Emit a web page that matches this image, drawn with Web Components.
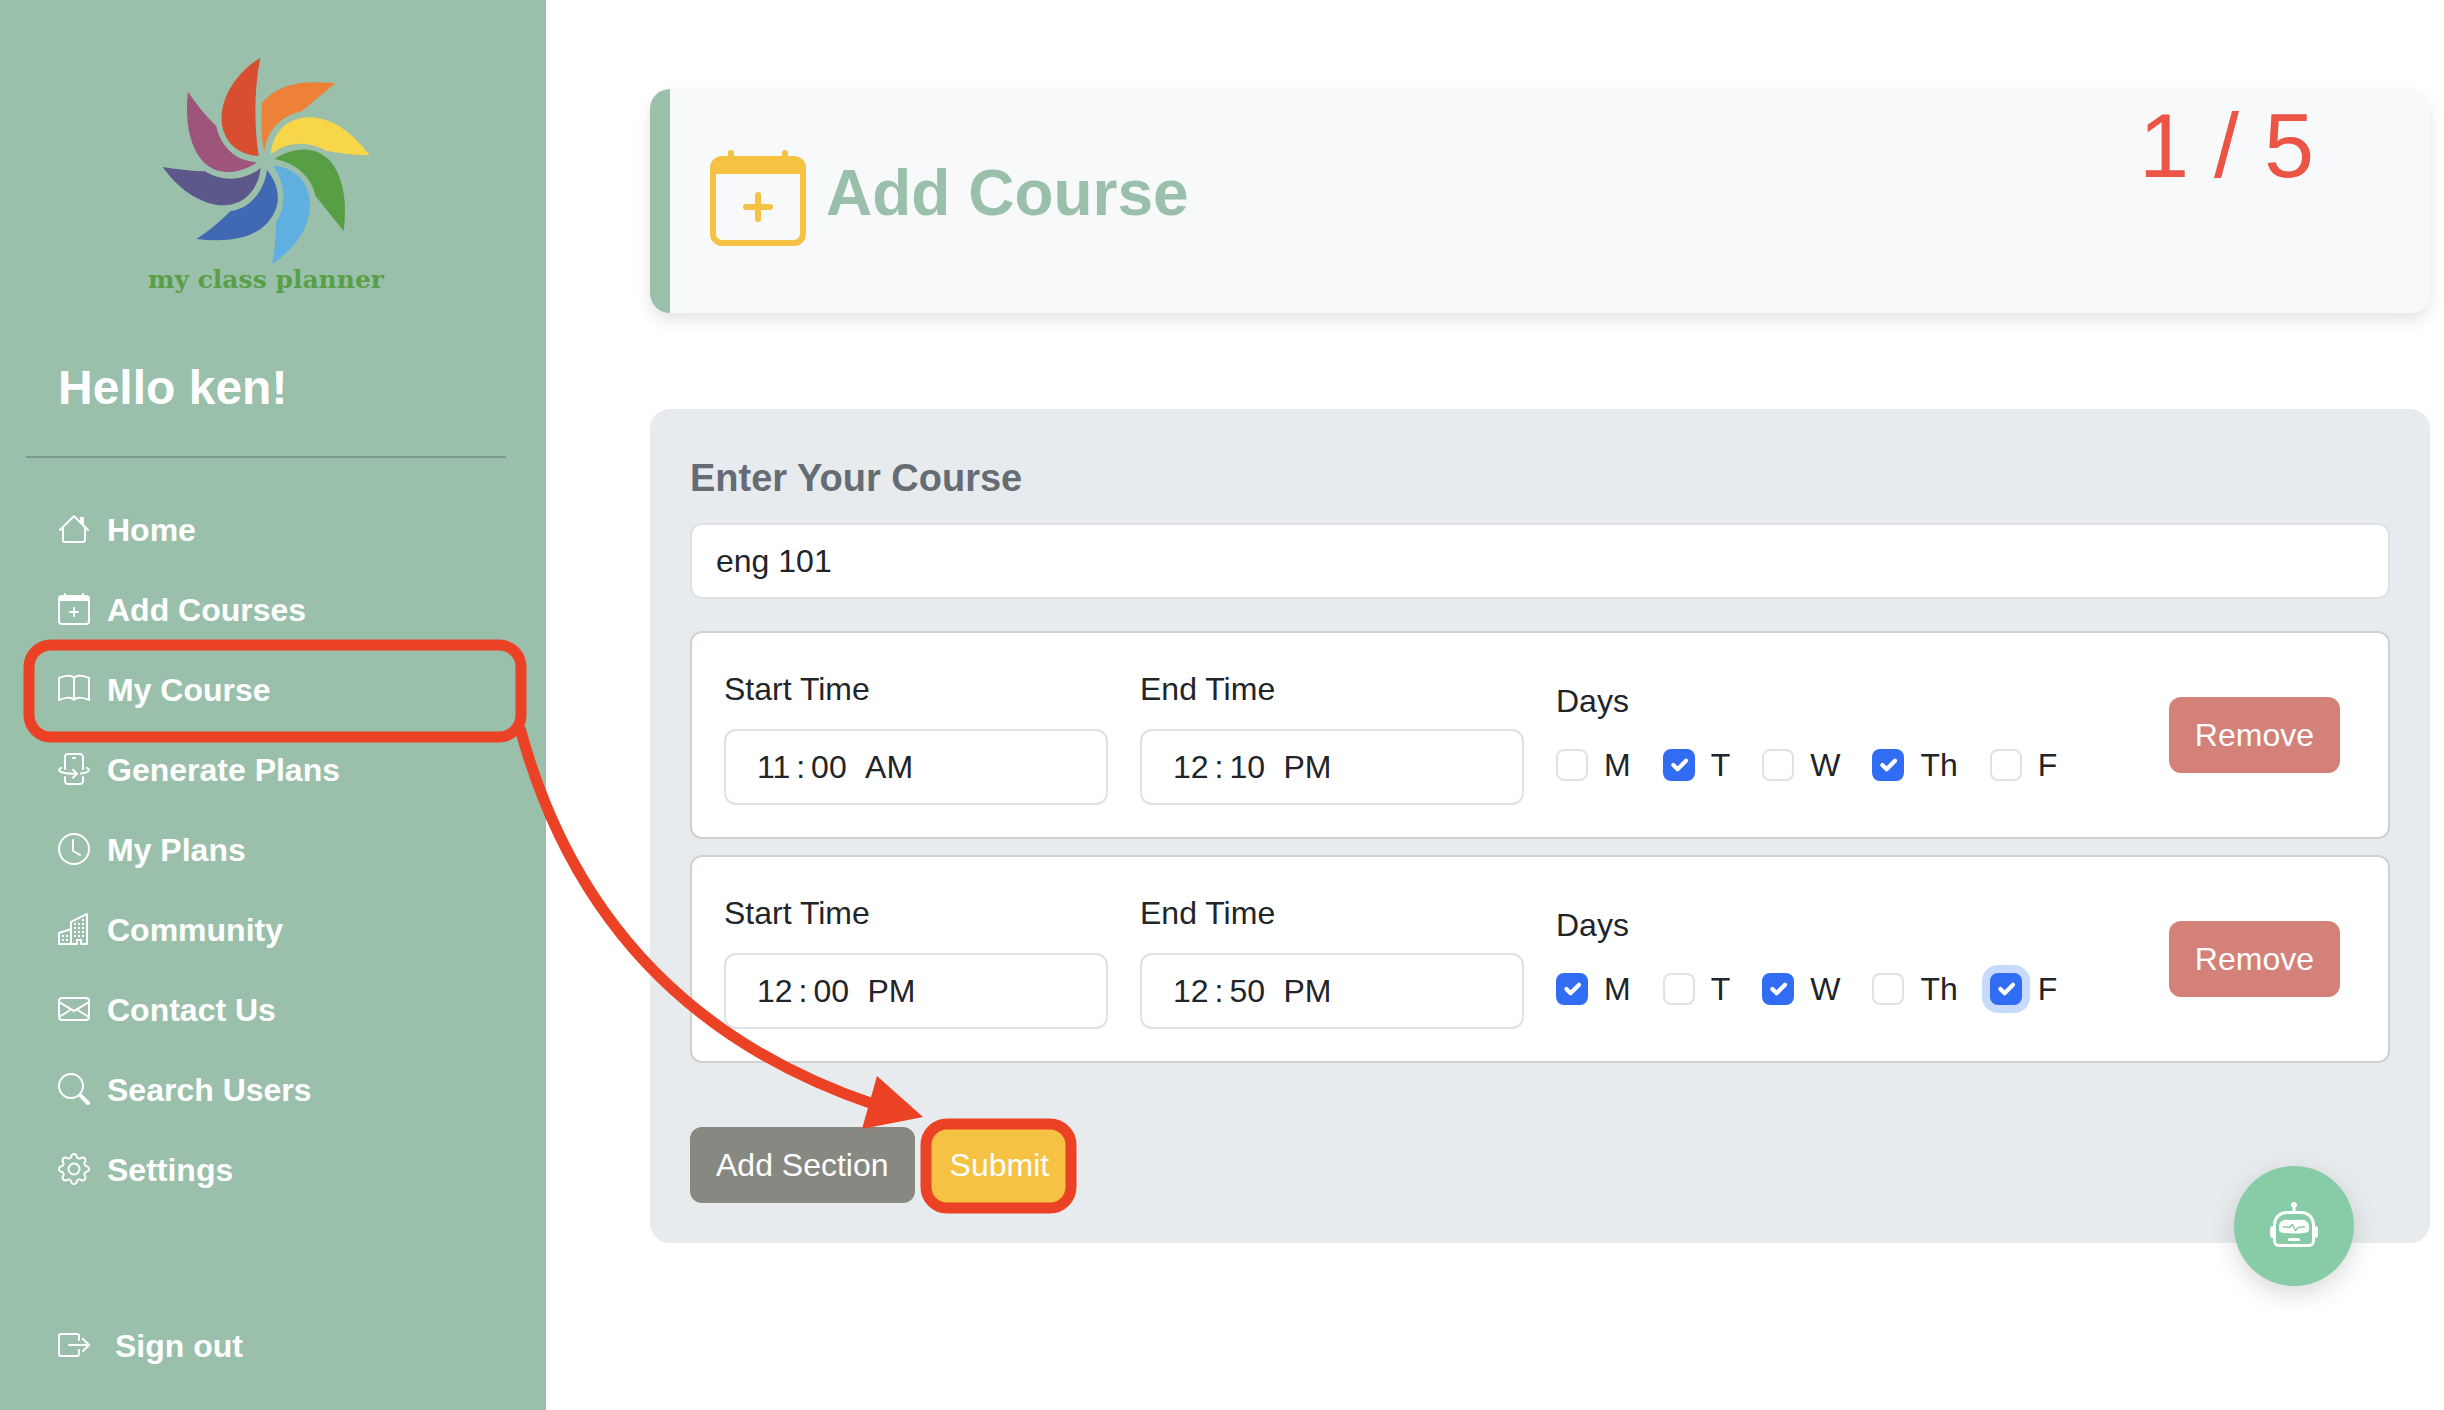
<!DOCTYPE html>
<html lang="en-US">
<head>
<meta charset="utf-8">
<title>My Class Planner</title>
<style>
  html, body { margin: 0; }
  body {
    font-family: "Liberation Sans", Arial, sans-serif;
    font-size: 32px;
    line-height: 48px;
    color: #212529;
    background: #fff;
  }
</style>
</head>
<body>
<planner-app></planner-app>

<script>
const define = (name, html, setup) => {
  const template = document.createElement('template');
  template.innerHTML = html;
  customElements.define(name, class extends HTMLElement {
    constructor() {
      super();
      this.attachShadow({ mode: 'open' }).append(template.content.cloneNode(true));
    }
    connectedCallback() {
      if (setup && !this.ready) { this.ready = true; setup(this, this.shadowRoot); }
    }
  });
};

const ICONS = {
  house: '<path d="M8.707 1.5a1 1 0 0 0-1.414 0L.646 8.146a.5.5 0 0 0 .708.708L2 8.207V13.5A1.5 1.5 0 0 0 3.5 15h9a1.5 1.5 0 0 0 1.5-1.5V8.207l.646.647a.5.5 0 0 0 .708-.708L13 5.793V2.5a.5.5 0 0 0-.5-.5h-1a.5.5 0 0 0-.5.5v1.293zM13 7.207V13.5a.5.5 0 0 1-.5.5h-9a.5.5 0 0 1-.5-.5V7.207l5-5z"/>',
  calendar: '<path d="M8 7a.5.5 0 0 1 .5.5V9H10a.5.5 0 0 1 0 1H8.5v1.5a.5.5 0 0 1-1 0V10H6a.5.5 0 0 1 0-1h1.5V7.5A.5.5 0 0 1 8 7"/><path d="M3.5 0a.5.5 0 0 1 .5.5V1h8V.5a.5.5 0 0 1 1 0V1h1a2 2 0 0 1 2 2v11a2 2 0 0 1-2 2H2a2 2 0 0 1-2-2V3a2 2 0 0 1 2-2h1V.5a.5.5 0 0 1 .5-.5M1 4v10a1 1 0 0 0 1 1h12a1 1 0 0 0 1-1V4z"/>',
  book: '<path d="M1 2.828c.885-.37 2.154-.769 3.388-.893 1.33-.134 2.458.063 3.112.752v9.746c-.935-.53-2.12-.603-3.213-.493-1.18.12-2.37.461-3.287.811zm7.5-.141c.654-.689 1.782-.886 3.112-.752 1.234.124 2.503.523 3.388.893v9.923c-.918-.35-2.107-.692-3.287-.81-1.094-.111-2.278-.039-3.213.492zM8 1.783C7.015.936 5.587.81 4.287.94c-1.514.153-3.042.672-3.994 1.105A.5.5 0 0 0 0 2.5v11a.5.5 0 0 0 .707.455c.882-.4 2.303-.881 3.68-1.02 1.409-.142 2.59.087 3.223.877a.5.5 0 0 0 .78 0c.633-.79 1.814-1.019 3.222-.877 1.378.139 2.8.62 3.681 1.02A.5.5 0 0 0 16 13.5v-11a.5.5 0 0 0-.293-.455c-.952-.433-2.48-.952-3.994-1.105C10.413.809 8.985.936 8 1.783"/>',
  phone: '<g fill="none" stroke="currentColor" stroke-linecap="round" stroke-linejoin="round"><path d="M3.5 8V2A1.5 1.5 0 0 1 5 .5h6A1.5 1.5 0 0 1 12.5 2v6M3.5 12v2A1.5 1.5 0 0 0 5 15.5h6a1.5 1.5 0 0 0 1.5-1.5v-2M7.5 2.5h1M1.6 7.5C.9 7.8.5 8.1.5 8.5c0 1 3.2 1.9 7.5 1.9h1.5M7.5 8.4l2 2-2 2M14.4 7.5c.7.3 1.1.6 1.1 1 0 .7-1.5 1.4-4 1.8"/></g>',
  clock: '<path d="M8 3.5a.5.5 0 0 0-1 0V9a.5.5 0 0 0 .252.434l3.5 2a.5.5 0 0 0 .496-.868L8 8.71z"/><path d="M8 16A8 8 0 1 0 8 0a8 8 0 0 0 0 16m7-8A7 7 0 1 1 1 8a7 7 0 0 1 14 0"/>',
  buildings: '<path d="M14.763.075A.5.5 0 0 1 15 .5v15a.5.5 0 0 1-.5.5h-3a.5.5 0 0 1-.5-.5V14h-1v1.5a.5.5 0 0 1-.5.5h-9a.5.5 0 0 1-.5-.5V10a.5.5 0 0 1 .342-.474L6 7.64V4.5a.5.5 0 0 1 .276-.447l8-4a.5.5 0 0 1 .487.022M6 8.694 1 10.36V15h5zM7 15h2v-1.5a.5.5 0 0 1 .5-.5h2a.5.5 0 0 1 .5.5V15h2V1.309l-7 3.5z"/><path d="M2 11h1v1H2zm2 0h1v1H4zm-2 2h1v1H2zm2 0h1v1H4zm4-4h1v1H8zm2 0h1v1h-1zm-2 2h1v1H8zm2 0h1v1h-1zm2-2h1v1h-1zm0 2h1v1h-1zM8 7h1v1H8zm2 0h1v1h-1zm2 0h1v1h-1zM8 5h1v1H8zm2 0h1v1h-1zm2 0h1v1h-1zm0-2h1v1h-1z"/>',
  envelope: '<path d="M0 4a2 2 0 0 1 2-2h12a2 2 0 0 1 2 2v8a2 2 0 0 1-2 2H2a2 2 0 0 1-2-2zm2-1a1 1 0 0 0-1 1v.217l7 4.2 7-4.2V4a1 1 0 0 0-1-1zm13 2.383-4.708 2.825L15 11.105zm-.034 6.876-5.64-3.471L8 9.583l-1.326-.795-5.64 3.47A1 1 0 0 0 2 13h12a1 1 0 0 0 .966-.741M1 11.105l4.708-2.897L1 5.383z"/>',
  search: '<path d="M11.742 10.344a6.5 6.5 0 1 0-1.397 1.398h-.001q.044.06.098.115l3.85 3.85a1 1 0 0 0 1.415-1.414l-3.85-3.85a1 1 0 0 0-.115-.1zM12 6.5a5.5 5.5 0 1 1-11 0 5.5 5.5 0 0 1 11 0"/>',
  gear: '<path d="M8 4.754a3.246 3.246 0 1 0 0 6.492 3.246 3.246 0 0 0 0-6.492M5.754 8a2.246 2.246 0 1 1 4.492 0 2.246 2.246 0 0 1-4.492 0"/><path d="M9.796 1.343c-.527-1.79-3.065-1.79-3.592 0l-.094.319a.873.873 0 0 1-1.255.52l-.292-.16c-1.64-.892-3.433.902-2.54 2.541l.159.292a.873.873 0 0 1-.52 1.255l-.319.094c-1.79.527-1.79 3.065 0 3.592l.319.094a.873.873 0 0 1 .52 1.255l-.16.292c-.892 1.64.901 3.434 2.541 2.54l.292-.159a.873.873 0 0 1 1.255.52l.094.319c.527 1.79 3.065 1.79 3.592 0l.094-.319a.873.873 0 0 1 1.255-.52l.292.16c1.64.893 3.434-.902 2.54-2.541l-.159-.292a.873.873 0 0 1 .52-1.255l.319-.094c1.79-.527 1.79-3.065 0-3.592l-.319-.094a.873.873 0 0 1-.52-1.255l.16-.292c.893-1.64-.902-3.433-2.541-2.54l-.292.159a.873.873 0 0 1-1.255-.52zm-2.633.283c.246-.835 1.428-.835 1.674 0l.094.319a1.873 1.873 0 0 0 2.693 1.115l.291-.16c.764-.415 1.6.42 1.184 1.185l-.159.292a1.873 1.873 0 0 0 1.116 2.692l.318.094c.835.246.835 1.428 0 1.674l-.319.094a1.873 1.873 0 0 0-1.115 2.693l.16.291c.415.764-.42 1.6-1.185 1.184l-.291-.159a1.873 1.873 0 0 0-2.693 1.116l-.094.318c-.246.835-1.428.835-1.674 0l-.094-.319a1.873 1.873 0 0 0-2.692-1.115l-.292.16c-.764.415-1.6-.42-1.184-1.185l.159-.291A1.873 1.873 0 0 0 1.945 8.93l-.319-.094c-.835-.246-.835-1.428 0-1.674l.319-.094A1.873 1.873 0 0 0 3.06 4.377l-.16-.292c-.415-.764.42-1.6 1.185-1.184l.292.159a1.873 1.873 0 0 0 2.692-1.115z"/>',
  exit: '<path d="M10 12.5a.5.5 0 0 1-.5.5h-8a.5.5 0 0 1-.5-.5v-9a.5.5 0 0 1 .5-.5h8a.5.5 0 0 1 .5.5v2a.5.5 0 0 0 1 0v-2A1.5 1.5 0 0 0 9.5 2h-8A1.5 1.5 0 0 0 0 3.5v9A1.5 1.5 0 0 0 1.5 14h8a1.5 1.5 0 0 0 1.5-1.5v-2a.5.5 0 0 0-1 0z"/><path d="M15.854 8.354a.5.5 0 0 0 0-.708l-3-3a.5.5 0 0 0-.708.708L14.293 7.5H5.5a.5.5 0 0 0 0 1h8.793l-2.147 2.146a.5.5 0 0 0 .708.708z"/>',
  robot: '<path d="M6 12.5a.5.5 0 0 1 .5-.5h3a.5.5 0 0 1 0 1h-3a.5.5 0 0 1-.5-.5M3 8.062C3 6.76 4.235 5.765 5.53 5.886a26.6 26.6 0 0 0 4.94 0C11.765 5.765 13 6.76 13 8.062v1.157a.93.93 0 0 1-.765.935c-.845.147-2.34.346-4.235.346s-3.39-.2-4.235-.346A.93.93 0 0 1 3 9.219zm4.542-.827a.25.25 0 0 0-.217.068l-.92.9a25 25 0 0 1-1.871-.183.25.25 0 0 0-.068.495c.55.076 1.232.149 2.02.193a.25.25 0 0 0 .189-.071l.754-.736.847 1.71a.25.25 0 0 0 .404.062l.932-.97a25 25 0 0 0 1.922-.188.25.25 0 0 0-.068-.495c-.538.074-1.207.145-1.98.189a.25.25 0 0 0-.166.076l-.754.785-.842-1.7a.25.25 0 0 0-.182-.135"/><path d="M8.5 1.866a1 1 0 1 0-1 0V3h-2A4.5 4.5 0 0 0 1 7.5V8a1 1 0 0 0-1 1v2a1 1 0 0 0 1 1v1a2 2 0 0 0 2 2h10a2 2 0 0 0 2-2v-1a1 1 0 0 0 1-1V9a1 1 0 0 0-1-1v-.5A4.5 4.5 0 0 0 10.5 3h-2zM14 7.5V13a1 1 0 0 1-1 1H3a1 1 0 0 1-1-1V7.5A3.5 3.5 0 0 1 5.5 4h5A3.5 3.5 0 0 1 14 7.5"/>'
};

define('ui-icon', `
  <style>
    :host { display: inline-block; width: 32px; height: 32px; vertical-align: -4px; }
    svg { display: block; width: 100%; height: 100%; fill: currentColor; }
  </style>
  <svg viewBox="0 0 16 16" aria-hidden="true"></svg>`,
  (el, root) => { root.querySelector('svg').innerHTML = ICONS[el.getAttribute('name')]; });

define('planner-logo', `
  <style>
    :host { display: flex; flex-direction: column; align-items: center; color: #599f45; }
    svg { display: block; width: 300px; height: 226px; }
    span { font: bold 25px/28px "DejaVu Serif", serif; }
  </style>
  <svg viewBox="-12 0 900 678" role="img" aria-label="Pinwheel">
    <path fill="#d84e31" d="M421 53C350 98 301 170 305 245C310 303 352 345 416 348C402 250 402 150 421 53Z"/>
    <path fill="#ed8137" d="M426 189C475 130 550 120 646 130L545 214C483 228 440 270 433 337C423 290 424 240 426 189Z"/>
    <path fill="#f7d64a" d="M453 343C457 270 512 228 575 232C650 238 705 288 749 346Q680 344 618 332C565 302 500 304 453 343Z"/>
    <path fill="#579e44" d="M463 357C525 317 598 315 640 375C674 427 681 500 671 573L586 467C577 412 525 367 463 357Z"/>
    <path fill="#5fafe1" d="M460 378C516 378 570 422 570 495C568 570 520 630 456 672C465 630 468 590 469 545C503 490 494 428 460 378Z"/>
    <path fill="#4168b3" d="M441 390C482 440 485 500 445 545C400 600 310 607 230 597Q285 560 332 513C390 505 432 455 441 390Z"/>
    <path fill="#5c588b" d="M422 384C417 440 380 492 315 496C240 498 170 440 128 381Q200 393 255 394C305 425 370 425 422 384Z"/>
    <path fill="#9d557b" d="M411 367C360 402 290 412 245 360C205 310 195 235 204 155Q240 210 289 259C302 322 350 364 411 367Z"/>
  </svg>
  <span>my class planner</span>`);

define('nav-item', `
  <style>
    :host { display: block; }
    a { display: block; padding: 16px 32px; color: #fff; font-weight: bold; text-decoration: none; }
    ui-icon { margin-right: 17px; }
    :host([wide]) ui-icon { margin-right: 25px; }
  </style>
  <a href="#"><slot></slot></a>`,
  (el, root) => {
    const icon = document.createElement('ui-icon');
    icon.setAttribute('name', el.getAttribute('icon'));
    root.querySelector('a').prepend(icon);
  });

define('side-bar', `
  <style>
    :host { display: block; box-sizing: border-box; flex: none; width: 546px; padding: 40px 40px 24px 26px; background: #9abfaa; color: #fff; }
    h2 { margin: 65px 32px 39px; font-size: 48px; line-height: 58px; }
    hr { margin: 0 0 32px; border: 0; height: 2px; background: #7b9988; }
    footer { margin-top: 96px; }
  </style>
  <planner-logo></planner-logo>
  <h2>Hello ken!</h2>
  <hr>
  <nav>
    <nav-item icon="house">Home</nav-item>
    <nav-item icon="calendar">Add Courses</nav-item>
    <nav-item icon="book">My Course</nav-item>
    <nav-item icon="phone">Generate Plans</nav-item>
    <nav-item icon="clock">My Plans</nav-item>
    <nav-item icon="buildings">Community</nav-item>
    <nav-item icon="envelope">Contact Us</nav-item>
    <nav-item icon="search">Search Users</nav-item>
    <nav-item icon="gear">Settings</nav-item>
  </nav>
  <footer><nav-item icon="exit" wide>Sign out</nav-item></footer>`);

define('page-header', `
  <style>
    :host { display: flex; justify-content: space-between; align-items: flex-start; border-left: 20px solid #9abfaa; border-radius: 20px; background: #f8f9fb; box-shadow: 0 8px 16px rgba(0, 0, 0, .1); }
    .title { display: flex; gap: 20px; padding: 61px 40px 67px; }
    ui-icon { width: 96px; height: 96px; color: #f6c244; }
    h1 { margin: 0; font-size: 64px; line-height: 86px; color: #9abfaa; }
    .step { padding: 12px 116px 0 0; font-size: 90px; line-height: 90px; color: #ec5545; }
  </style>
  <div class="title"><ui-icon name="calendar"></ui-icon><h1><slot></slot></h1></div>
  <div class="step"><slot name="step"></slot></div>`);

define('ui-button', `
  <style>
    :host { display: block; }
    button { display: block; margin: 0; padding: 14px 26px; border: 0; border-radius: 12px; font: inherit; color: #fff; background: var(--fill); }
  </style>
  <button type="button"><slot></slot></button>`);

define('text-field', `
  <style>
    :host { display: block; }
    label { display: block; margin-bottom: 16px; }
    :host([heading]) label { font-size: 38px; font-weight: bold; line-height: 58px; color: #666c73; }
    input { display: block; box-sizing: border-box; width: 100%; height: 76px; margin: 0; padding: 12px 24px; border: 2px solid #dee2e6; border-radius: 12px; background: #fff; font: inherit; color: inherit; outline: 0; }
    input::-webkit-calendar-picker-indicator { display: none; }
    input::-webkit-datetime-edit { padding: 0 1px; }
    input::-webkit-datetime-edit-fields-wrapper { padding: 0; }
    input::-webkit-datetime-edit-hour-field,
    input::-webkit-datetime-edit-minute-field,
    input::-webkit-datetime-edit-ampm-field { padding: 0 6px; }
  </style>
  <label for="field"><slot></slot></label>
  <input id="field">`,
  (el, root) => {
    const input = root.querySelector('input');
    input.type = el.getAttribute('type') || 'text';
    input.setAttribute('value', el.getAttribute('value'));
  });

define('day-check', `
  <style>
    :host { display: flex; gap: 16px; }
    input { appearance: none; flex: none; width: 32px; height: 32px; margin: 8px 0 0; border: 2px solid #dee2e6; border-radius: 8px; background: #fff; }
    input:checked { border-color: #316cf4; background: #316cf4 url("data:image/svg+xml,%3Csvg xmlns='http://www.w3.org/2000/svg' viewBox='0 0 20 20'%3E%3Cpath fill='none' stroke='%23fff' stroke-linecap='round' stroke-linejoin='round' stroke-width='3' d='m6 10 3 3 6-6'/%3E%3C/svg%3E") center / 100%; }
    :host([active]) input { box-shadow: 0 0 0 8px #c7dafb; }
  </style>
  <input type="checkbox" id="day"><label for="day"><slot></slot></label>`,
  (el, root) => { root.querySelector('input').checked = el.hasAttribute('checked'); });

define('course-section', `
  <style>
    :host { display: grid; grid-template-columns: 3fr 3fr 4fr 2fr; align-items: center; padding: 32px 16px; border: 2px solid #d0d1d2; border-radius: 12px; background: #fff; }
    text-field, fieldset { margin: 0 16px; }
    fieldset { min-width: 0; padding: 0 0 4px; border: 0; }
    legend { padding: 0; margin-bottom: 16px; }
    .days { display: flex; gap: 32px; }
    .remove { justify-self: end; margin-right: 32px; --fill: #d38179; }
  </style>
  <fieldset><legend>Days</legend><div class="days"></div></fieldset>
  <ui-button class="remove">Remove</ui-button>`,
  (el, root) => {
    for (const [part, title] of [['start', 'Start Time'], ['end', 'End Time']]) {
      const field = document.createElement('text-field');
      field.setAttribute('type', 'time');
      field.setAttribute('value', el.getAttribute(part));
      field.textContent = title;
      root.querySelector('fieldset').before(field);
    }
    const chosen = el.getAttribute('days').split(' ');
    for (const day of ['M', 'T', 'W', 'Th', 'F']) {
      const check = document.createElement('day-check');
      check.textContent = day;
      if (chosen.includes(day)) check.setAttribute('checked', '');
      if (el.getAttribute('active') === day) check.setAttribute('active', '');
      root.querySelector('.days').append(check);
    }
  });

define('course-form', `
  <style>
    :host { display: block; }
    form { padding: 40px; border-radius: 20px; background: #e8ebee; }
    .sections { display: grid; gap: 16px; margin: 32px 0 64px; }
    .actions { display: flex; gap: 9px; }
    .add { --fill: #888882; }
    .submit { --fill: #f6c244; }
  </style>
  <form>
    <text-field heading value="eng 101">Enter Your Course</text-field>
    <div class="sections">
      <course-section start="11:00" end="12:10" days="T Th"></course-section>
      <course-section start="12:00" end="12:50" days="M W F" active="F"></course-section>
    </div>
    <div class="actions">
      <ui-button class="add">Add Section</ui-button>
      <ui-button class="submit">Submit</ui-button>
    </div>
  </form>`);

define('chat-button', `
  <style>
    :host { position: absolute; right: 90px; top: 1166px; }
    button { display: flex; align-items: center; justify-content: center; width: 120px; height: 120px; padding: 0; border: 0; border-radius: 50%; background: #88cca7; color: #fff; box-shadow: 0 8px 24px rgba(0, 0, 0, .15); }
    ui-icon { width: 48px; height: 48px; }
  </style>
  <button type="button" aria-label="Open chat"><ui-icon name="robot"></ui-icon></button>`);

/* Tutorial marks drawn over the page: two rings and the arrow between them. */
define('guide-marks', `
  <style>
    :host { position: absolute; left: 0; top: 0; pointer-events: none; }
    svg { display: block; }
  </style>
  <svg width="1100" height="1240" aria-hidden="true">
    <g fill="none" stroke="#eb4226" stroke-width="11">
      <rect x="29" y="645" width="492" height="92" rx="22"/>
      <rect x="926" y="1124" width="145" height="84" rx="21"/>
      <path d="M520 728Q596 1010 873 1104"/>
    </g>
    <path fill="#eb4226" d="M877 1076 923 1117 862 1129Z"/>
  </svg>`);

define('planner-app', `
  <style>
    :host { display: flex; position: relative; min-height: 100vh; }
    main { flex: 1; min-width: 0; padding: 89px 14px 89px 104px; }
    page-header { margin-bottom: 96px; }
  </style>
  <side-bar></side-bar>
  <main>
    <page-header>Add Course<span slot="step">1 / 5</span></page-header>
    <course-form></course-form>
  </main>
  <chat-button></chat-button>
  <guide-marks></guide-marks>`);
</script>
</body>
</html>
